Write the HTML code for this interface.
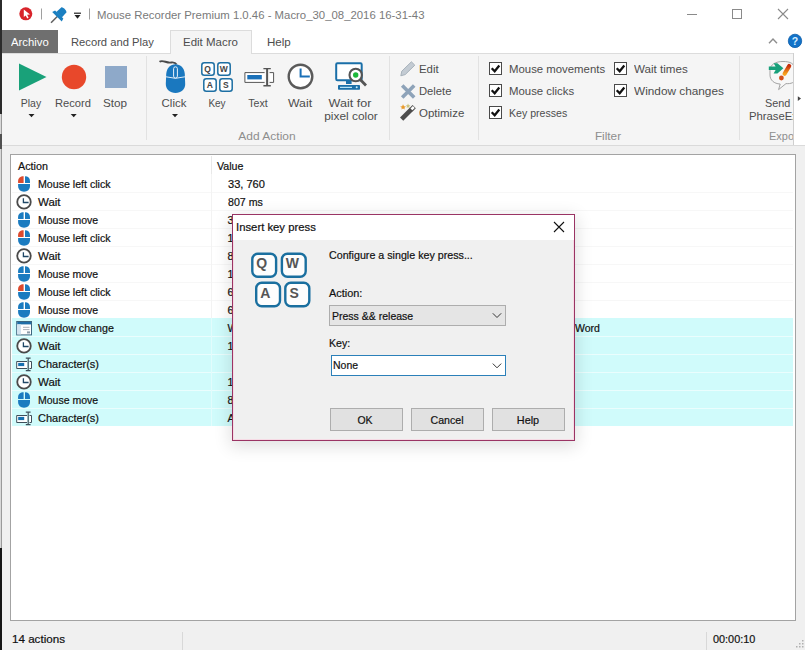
<!DOCTYPE html>
<html><head><meta charset="utf-8">
<style>
html,body{margin:0;padding:0;}
body{width:805px;height:650px;position:relative;overflow:hidden;background:#fff;font-family:"Liberation Sans", sans-serif;}
.t{position:absolute;white-space:nowrap;font-family:"Liberation Sans", sans-serif;}
.b{-webkit-text-stroke:0.2px currentColor;}
.r{position:absolute;}
svg.r{overflow:visible;}
</style></head><body>
<div class="r" style="left:0px;top:0px;width:805px;height:30px;background:#ffffff"></div>
<div class="r" style="left:0px;top:30px;width:805px;height:23px;background:#ffffff"></div>
<div class="r" style="left:0px;top:53px;width:805px;height:93px;background:#f5f5f5;border-top:1px solid #dcdcdc;box-sizing:border-box"></div>
<div class="r" style="left:0px;top:145px;width:805px;height:1px;background:#dadada"></div>
<div class="r" style="left:0px;top:146px;width:805px;height:504px;background:#f0f0f0"></div>
<div class="r" style="left:0px;top:0px;width:2px;height:114px;background:#2b2b2b"></div>
<div class="r" style="left:0px;top:114px;width:2px;height:20px;background:#d8d8d8;border-right:1px solid #9a9a9a;box-sizing:border-box"></div>
<div class="r" style="left:0px;top:134px;width:2px;height:15px;background:#505050"></div>
<div class="r" style="left:0px;top:149px;width:2px;height:399px;background:#d8d8d8;border-right:1px solid #9a9a9a;box-sizing:border-box"></div>
<div class="r" style="left:0px;top:548px;width:2px;height:102px;background:#161616"></div>
<svg class="r" style="left:0;top:0" width="100" height="30" viewBox="0 0 100 30">
<circle cx="25.8" cy="13.8" r="6.5" fill="#d8232a"/>
<path d="M23.8 9.4 L23.8 17 L25.6 15.4 L27.3 18.4 L28.6 17.7 L27.1 14.8 L30 14.6 Z" fill="#fff"/>
<rect x="41" y="8.5" width="1" height="11" fill="#a0a0a0"/>
<g transform="translate(57.25 16.5) rotate(45)">
<path d="M0 0 L0 8.8" stroke="#5f5f5f" stroke-width="1.5"/>
<path d="M-6.8 0.4 L6.8 0.4 L5.8 -2.8 L-5.8 -2.8 Z" fill="#1a7fc1"/>
<path d="M-3.9 -2.6 L3.9 -2.6 L3.6 -9.2 C3.4 -11 -3.4 -11 -3.6 -9.2 Z" fill="#1a7fc1"/>
</g>
<rect x="74" y="12.6" width="7" height="1.2" fill="#222"/>
<path d="M74.5 15 L80.5 15 L77.5 18.8 Z" fill="#222"/>
<rect x="89" y="8.5" width="1" height="11" fill="#a0a0a0"/>
</svg>
<div class="t" style="left:96.70px;top:10px;font-size:11.34px;line-height:11.34px;color:#7a7a7a;transform:scaleX(1.0039);transform-origin:0 0;">Mouse Recorder Premium 1.0.46 - Macro_30_08_2016 16-31-43</div>
<svg class="r" style="left:670px;top:0" width="135" height="30" viewBox="670 0 135 30">
<rect x="687" y="14" width="10" height="1" fill="#8a8a8a"/>
<rect x="732.5" y="9.5" width="9" height="9" fill="none" stroke="#8a8a8a" stroke-width="1"/>
<path d="M778 9 L788 19 M788 9 L778 19" stroke="#8a8a8a" stroke-width="1.1"/>
</svg>
<div class="r" style="left:2px;top:30px;width:56px;height:23px;background:#6f6f6f"></div>
<div class="t" style="left:11.00px;top:37px;font-size:11px;line-height:11px;color:#ffffff;transform:scaleX(1.0303);transform-origin:0 0;">Archivo</div>
<div class="t" style="left:71.30px;top:37px;font-size:11.1px;line-height:11.1px;color:#4d4d4d;transform:scaleX(1.0094);transform-origin:0 0;">Record and Play</div>
<div class="r" style="left:170px;top:30px;width:82px;height:24px;background:#f5f5f5;border:1px solid #dcdcdc;border-bottom:none;box-sizing:border-box"></div>
<div class="t" style="left:182.60px;top:37px;font-size:11.3px;line-height:11.3px;color:#4d4d4d;transform:scaleX(1.0167);transform-origin:0 0;">Edit Macro</div>
<div class="t" style="left:266.50px;top:37px;font-size:11.2px;line-height:11.2px;color:#4d4d4d;transform:scaleX(1.0348);transform-origin:0 0;">Help</div>
<svg class="r" style="left:760px;top:30px" width="45" height="23" viewBox="760 30 45 23">
<path d="M769 43.2 L773 39 L777 43.2" fill="none" stroke="#8e8e8e" stroke-width="1.4"/>
<circle cx="795" cy="40.9" r="6.7" fill="#1272c8" stroke="#0b5ca8" stroke-width="0.8"/>
<text x="795" y="45.3" font-family="Liberation Sans" font-weight="bold" font-size="10.5" fill="#d6efff" text-anchor="middle">?</text>
</svg>
<svg class="r" style="left:0;top:53px" width="150" height="92" viewBox="0 53 150 92">
<path d="M19 63.5 L46.5 77 L19 90.5 Z" fill="#19a179"/>
<circle cx="74" cy="77" r="12.2" fill="#e8482b"/>
<rect x="105" y="66" width="22" height="22" fill="#8ea9c9"/>
<path d="M28.5 114 L34.5 114 L31.5 117.3 Z" fill="#222"/>
<path d="M70.7 114 L76.7 114 L73.7 117.3 Z" fill="#222"/>
</svg>
<div class="t" style="left:-68.80px;width:200px;text-align:center;top:98px;font-size:11.3px;line-height:11.3px;color:#4d4d4d;transform:scaleX(0.9279);transform-origin:50% 0;">Play</div>
<div class="t" style="left:-26.90px;width:200px;text-align:center;top:98px;font-size:11.3px;line-height:11.3px;color:#4d4d4d;transform:scaleX(0.9884);transform-origin:50% 0;">Record</div>
<div class="t" style="left:15.00px;width:200px;text-align:center;top:98px;font-size:11.3px;line-height:11.3px;color:#4d4d4d;transform:scaleX(1.0373);transform-origin:50% 0;">Stop</div>
<div class="r" style="left:146px;top:56px;width:1px;height:84px;background:#e2e2e2"></div>
<svg class="r" style="left:150px;top:53px" width="240" height="92" viewBox="150 53 240 92">
<!-- mouse -->
<path d="M159.5 61.8 C162.5 59.6 166 62.8 170 62.6 C173 62.4 175 61.6 176.5 64.5" fill="none" stroke="#4a4a4a" stroke-width="1.9"/>
<path d="M175.5 64.3 C180.5 64.3 184.2 67.8 184.8 74 L185.2 84 C185.2 89.5 181 93 175.5 93 C170 93 165.8 89.5 165.8 84 L166.2 74 C166.8 67.8 170.5 64.3 175.5 64.3 Z" fill="#1a78bf"/>
<path d="M166 76.8 Q175.5 79.8 185 76.8" fill="none" stroke="#dcebf7" stroke-width="1"/>
<rect x="173.6" y="66.8" width="3.8" height="11.2" rx="1.9" fill="#1a78bf" stroke="#e9f3fb" stroke-width="1"/>
<path d="M172 114 L178 114 L175 117.3 Z" fill="#222"/>
<!-- keys -->
<g fill="#fff" stroke="#1d6fa3" stroke-width="1.5">
<rect x="201.8" y="62.8" width="12.4" height="12.4" rx="2.5"/>
<rect x="217.8" y="62.8" width="12.4" height="12.4" rx="2.5"/>
<rect x="203.8" y="78.8" width="12.4" height="12.4" rx="2.5"/>
<rect x="219.8" y="78.8" width="12.4" height="12.4" rx="2.5"/>
</g>
<g font-family="Liberation Sans" font-weight="bold" font-size="8.5" fill="#444" text-anchor="middle">
<text x="207.5" y="72">Q</text><text x="223.8" y="72">W</text><text x="209.8" y="88">A</text><text x="225.8" y="88">S</text>
</g>
<!-- text icon -->
<path d="M264.6 72.6 L244.9 72.6 L244.9 82.4 L264.6 82.4 M269.6 72.6 L273.6 72.6 L273.6 82.4 L269.6 82.4" fill="#fff" stroke="#555" stroke-width="1"/>
<rect x="247.3" y="75" width="14.5" height="4.4" fill="#1a70b8"/>
<path d="M267.1 68.8 L267.1 85.6" stroke="#555" stroke-width="2"/>
<path d="M263.4 68.6 L270.8 68.6 M263.4 85.8 L270.8 85.8" stroke="#555" stroke-width="1.4"/>
<!-- clock -->
<circle cx="300.5" cy="76.5" r="11.8" fill="#fff" stroke="#5a5a5a" stroke-width="2.4"/>
<path d="M300.6 68.4 L300.6 76.6 L309.8 76.6" stroke="#1a70b8" stroke-width="2" fill="none"/>
<!-- monitor -->
<rect x="336.2" y="63.2" width="25.5" height="17" rx="1.2" fill="#fff" stroke="#1a6fa8" stroke-width="2"/>
<rect x="346" y="81" width="5.6" height="3" fill="#1a6fa8"/>
<rect x="338" y="85" width="22" height="4.7" rx="0.8" fill="#1a6fa8"/>
<rect x="340" y="86.8" width="12" height="1.1" fill="#c8f0ff"/>
<circle cx="356.7" cy="87.3" r="1" fill="#c8f0ff"/>
<path d="M360.2 79.6 L366 85.4" stroke="#555" stroke-width="2.8"/>
<circle cx="355.7" cy="75" r="6.2" fill="#fff" stroke="#555" stroke-width="2.1"/>
<circle cx="355.7" cy="75" r="2.7" fill="#1db83a"/>
</svg>
<div class="t" style="left:74.00px;width:200px;text-align:center;top:98px;font-size:11.3px;line-height:11.3px;color:#4d4d4d;transform:scaleX(1.0122);transform-origin:50% 0;">Click</div>
<div class="t" style="left:116.90px;width:200px;text-align:center;top:98px;font-size:11.3px;line-height:11.3px;color:#4d4d4d;transform:scaleX(0.8835);transform-origin:50% 0;">Key</div>
<div class="t" style="left:158.40px;width:200px;text-align:center;top:98px;font-size:11.3px;line-height:11.3px;color:#4d4d4d;transform:scaleX(0.9405);transform-origin:50% 0;">Text</div>
<div class="t" style="left:200.20px;width:200px;text-align:center;top:98px;font-size:11.3px;line-height:11.3px;color:#4d4d4d;transform:scaleX(1.0870);transform-origin:50% 0;">Wait</div>
<div class="t" style="left:250.20px;width:200px;text-align:center;top:98px;font-size:11.3px;line-height:11.3px;color:#4d4d4d;transform:scaleX(1.1117);transform-origin:50% 0;">Wait for</div>
<div class="t" style="left:250.90px;width:200px;text-align:center;top:111px;font-size:11.3px;line-height:11.3px;color:#4d4d4d;transform:scaleX(1.0532);transform-origin:50% 0;">pixel color</div>
<div class="t" style="left:166.50px;width:200px;text-align:center;top:131px;font-size:11.3px;line-height:11.3px;color:#8e8e8e;transform:scaleX(1.0608);transform-origin:50% 0;">Add Action</div>
<div class="r" style="left:389px;top:56px;width:1px;height:84px;background:#e2e2e2"></div>
<svg class="r" style="left:395px;top:53px" width="85" height="92" viewBox="395 53 85 92">
<path d="M400.8 75.8 L401.8 71.2 L411.4 61.8 L414.8 65.2 L405.2 74.6 Z" fill="#c3cbd3" stroke="#a0abb6" stroke-width="0.9"/>
<path d="M402.2 85.4 L414.2 97.4 M414.2 85.4 L402.2 97.4" stroke="#8ea3b9" stroke-width="3.6"/>
<path d="M401.6 119.2 L411.6 109.2" stroke="#4d4d4d" stroke-width="4.6"/>
<path d="M411 109.8 L414.2 106.6" stroke="#4d4d4d" stroke-width="4.6"/>
<path d="M411.4 109.4 L413.8 107" stroke="#fff" stroke-width="2.6"/>
<path d="M403 104.3 L404 106.3 L406 106.6 L404.4 107.8 L404.8 109.6 L403 108.6 L401.4 109.6 L401.8 107.8 L400.2 106.6 L402.2 106.3 Z" fill="#e89a2a"/>
<path d="M408 103.6 L408.8 105.2 L410.4 105.4 L409.2 106.4 L409.5 108 L408 107.2 L406.6 108 L407 106.4 L405.8 105.4 L407.3 105.2 Z" fill="#c8c07a"/>
</svg>
<div class="t" style="left:418.60px;top:64px;font-size:11.3px;line-height:11.3px;color:#4d4d4d;transform:scaleX(1.0119);transform-origin:0 0;">Edit</div>
<div class="t" style="left:418.60px;top:86px;font-size:11.3px;line-height:11.3px;color:#4d4d4d;transform:scaleX(0.9952);transform-origin:0 0;">Delete</div>
<div class="t" style="left:418.60px;top:108px;font-size:11.3px;line-height:11.3px;color:#4d4d4d;transform:scaleX(1.0162);transform-origin:0 0;">Optimize</div>
<div class="r" style="left:478px;top:56px;width:1px;height:84px;background:#e2e2e2"></div>
<svg class="r" style="left:489px;top:62px" width="13" height="13" viewBox="0 0 13 13">
<rect x="0.5" y="0.5" width="12" height="12" fill="#fff" stroke="#4a4a4a" stroke-width="1"/>
<path d="M2.7 6.2 L5.7 9.2 L10.3 3.6" fill="none" stroke="#111" stroke-width="2.3"/>
</svg>
<svg class="r" style="left:489px;top:84px" width="13" height="13" viewBox="0 0 13 13">
<rect x="0.5" y="0.5" width="12" height="12" fill="#fff" stroke="#4a4a4a" stroke-width="1"/>
<path d="M2.7 6.2 L5.7 9.2 L10.3 3.6" fill="none" stroke="#111" stroke-width="2.3"/>
</svg>
<svg class="r" style="left:489px;top:106px" width="13" height="13" viewBox="0 0 13 13">
<rect x="0.5" y="0.5" width="12" height="12" fill="#fff" stroke="#4a4a4a" stroke-width="1"/>
<path d="M2.7 6.2 L5.7 9.2 L10.3 3.6" fill="none" stroke="#111" stroke-width="2.3"/>
</svg>
<svg class="r" style="left:614px;top:62px" width="13" height="13" viewBox="0 0 13 13">
<rect x="0.5" y="0.5" width="12" height="12" fill="#fff" stroke="#4a4a4a" stroke-width="1"/>
<path d="M2.7 6.2 L5.7 9.2 L10.3 3.6" fill="none" stroke="#111" stroke-width="2.3"/>
</svg>
<svg class="r" style="left:614px;top:84px" width="13" height="13" viewBox="0 0 13 13">
<rect x="0.5" y="0.5" width="12" height="12" fill="#fff" stroke="#4a4a4a" stroke-width="1"/>
<path d="M2.7 6.2 L5.7 9.2 L10.3 3.6" fill="none" stroke="#111" stroke-width="2.3"/>
</svg>
<div class="t" style="left:509.00px;top:64px;font-size:11.3px;line-height:11.3px;color:#4d4d4d;transform:scaleX(1.0069);transform-origin:0 0;">Mouse movements</div>
<div class="t" style="left:509.00px;top:86px;font-size:11.3px;line-height:11.3px;color:#4d4d4d;transform:scaleX(1.0077);transform-origin:0 0;">Mouse clicks</div>
<div class="t" style="left:509.00px;top:108px;font-size:11.3px;line-height:11.3px;color:#4d4d4d;transform:scaleX(0.9359);transform-origin:0 0;">Key presses</div>
<div class="t" style="left:634.00px;top:64px;font-size:11.3px;line-height:11.3px;color:#4d4d4d;transform:scaleX(1.0265);transform-origin:0 0;">Wait times</div>
<div class="t" style="left:634.00px;top:86px;font-size:11.3px;line-height:11.3px;color:#4d4d4d;transform:scaleX(1.0450);transform-origin:0 0;">Window changes</div>
<div class="t" style="left:508.30px;width:200px;text-align:center;top:131px;font-size:11.3px;line-height:11.3px;color:#8e8e8e;transform:scaleX(1.0428);transform-origin:50% 0;">Filter</div>
<div class="r" style="left:739px;top:56px;width:1px;height:84px;background:#e2e2e2"></div>
<div class="r" style="left:740px;top:54px;width:53px;height:90px;overflow:hidden">
<svg style="position:absolute;left:0;top:0" width="60" height="90" viewBox="740 54 60 90">
<defs><linearGradient id="exg" x1="0" y1="0" x2="0" y2="1"><stop offset="0" stop-color="#c8300e"/><stop offset="1" stop-color="#f7a21e"/></linearGradient></defs>
<path d="M770 70.5 C770 64.5 775.5 61.5 783 61.5 C790 61.5 795 63.5 795 70 L795 79 C795 82.5 791 84 786 83.6 L778.6 89.6 L780.2 84 C774 83.8 770 80 770 75 Z" fill="#f7f7f7" stroke="#9a9a9a" stroke-width="0.9"/>
<path d="M768.8 66.6 L775.6 66.6 L773.6 63.3 L777.4 63.3 L783.4 68.3 L777.4 73.5 L773.6 73.5 L775.6 70.1 L768.8 70.1 Z" fill="#18a07a"/>
<path d="M789.2 66 L784.6 73.8" stroke="url(#exg)" stroke-width="4.2" stroke-linecap="round"/>
<circle cx="781.4" cy="78" r="2.4" fill="#d4501c"/>
</svg>
<div class="t" style="left:0;width:78px;text-align:center;top:97.7px;top:{0}px"></div>
</div>
<div class="t" style="left:765.20px;top:98px;font-size:11.3px;line-height:11.3px;color:#4d4d4d;transform:scaleX(0.9592);transform-origin:0 0;">Send</div>
<div class="t" style="left:749.20px;top:111px;font-size:11.3px;line-height:11.3px;color:#4d4d4d;transform:scaleX(1.0003);transform-origin:0 0;">PhraseEx</div>
<div class="t" style="left:769.00px;top:131px;font-size:11.3px;line-height:11.3px;color:#8e8e8e;transform:scaleX(0.9709);transform-origin:0 0;">Expo</div>
<div class="r" style="left:793px;top:53px;width:12px;height:92px;background:#ffffff;border-left:1px solid #cfcfcf;box-sizing:border-box"></div>
<svg class="r" style="left:793px;top:53px" width="12" height="92" viewBox="793 53 12 92"><path d="M797.8 96.3 L801 98.6 L797.8 100.9 Z" fill="#444"/></svg>
<div class="r" style="left:10px;top:154px;width:786px;height:467px;background:#fff;border:1px solid #a3a3a3;box-sizing:border-box"></div>
<div class="r" style="left:211px;top:156px;width:1px;height:18px;background:#e8e8e8"></div>
<div class="t b" style="left:17.80px;top:161px;font-size:10.8px;line-height:10.8px;color:#111;transform:scaleX(0.9961);transform-origin:0 0;">Action</div>
<div class="t b" style="left:217.30px;top:161px;font-size:10.8px;line-height:10.8px;color:#111;transform:scaleX(0.9846);transform-origin:0 0;">Value</div>
<div class="r" style="left:12px;top:192px;width:781px;height:1px;background:#f7f7f7"></div>
<div class="r" style="left:211px;top:174px;width:1px;height:18px;background:#f3f3f3"></div>
<div class="t b" style="left:38.00px;top:179px;font-size:10.8px;line-height:10.8px;color:#111;transform:scaleX(0.9832);transform-origin:0 0;">Mouse left click</div>
<div class="t b" style="left:227.60px;top:179px;font-size:10.8px;line-height:10.8px;color:#111;transform:scaleX(1.0250);transform-origin:0 0;">33, 760</div>
<svg class="r" style="left:17px;top:175px" width="14" height="17" viewBox="0 0 14 17">
<path d="M6.6 1.2 L6.6 8 L1.1 8 L1.1 6.2 C1.1 3 3.4 1.2 6.6 1.2 Z" fill="#dc4a2e"/>
<path d="M8 1.2 L8 8 L13 8 L13 6.2 C13 3 11 1.2 8 1.2 Z" fill="#1a7bc0"/>
<path d="M1.1 9.1 L13 9.1 L13 11 C13 14.5 10.5 16.7 7 16.7 C3.6 16.7 1.1 14.5 1.1 11 Z" fill="#1a7bc0"/>
</svg>
<div class="r" style="left:12px;top:210px;width:781px;height:1px;background:#f7f7f7"></div>
<div class="r" style="left:211px;top:192px;width:1px;height:18px;background:#f3f3f3"></div>
<div class="t b" style="left:38.00px;top:197px;font-size:10.8px;line-height:10.8px;color:#111;transform:scaleX(1.0619);transform-origin:0 0;">Wait</div>
<div class="t b" style="left:227.60px;top:197px;font-size:10.8px;line-height:10.8px;color:#111;transform:scaleX(0.9829);transform-origin:0 0;">807 ms</div>
<svg class="r" style="left:16px;top:193px" width="16" height="17" viewBox="0 0 16 17">
<circle cx="8" cy="8.9" r="6.75" fill="#fff" stroke="#4a4a4a" stroke-width="1.8"/>
<path d="M7.4 5.2 L7.4 9.5 L12.6 9.5" fill="none" stroke="#1f4766" stroke-width="1.3"/>
</svg>
<div class="r" style="left:12px;top:228px;width:781px;height:1px;background:#f7f7f7"></div>
<div class="r" style="left:211px;top:210px;width:1px;height:18px;background:#f3f3f3"></div>
<div class="t b" style="left:38.00px;top:215px;font-size:10.8px;line-height:10.8px;color:#111;transform:scaleX(0.9739);transform-origin:0 0;">Mouse move</div>
<div class="t b" style="left:227.60px;top:215px;font-size:10.8px;line-height:10.8px;color:#111;">3</div>
<svg class="r" style="left:17px;top:211px" width="14" height="17" viewBox="0 0 14 17">
<path d="M6.6 1.2 L6.6 8 L1.1 8 L1.1 6.2 C1.1 3 3.4 1.2 6.6 1.2 Z" fill="#1a7bc0"/>
<path d="M8 1.2 L8 8 L13 8 L13 6.2 C13 3 11 1.2 8 1.2 Z" fill="#1a7bc0"/>
<path d="M1.1 9.1 L13 9.1 L13 11 C13 14.5 10.5 16.7 7 16.7 C3.6 16.7 1.1 14.5 1.1 11 Z" fill="#1a7bc0"/>
</svg>
<div class="r" style="left:12px;top:246px;width:781px;height:1px;background:#f7f7f7"></div>
<div class="r" style="left:211px;top:228px;width:1px;height:18px;background:#f3f3f3"></div>
<div class="t b" style="left:38.00px;top:233px;font-size:10.8px;line-height:10.8px;color:#111;transform:scaleX(0.9832);transform-origin:0 0;">Mouse left click</div>
<div class="t b" style="left:227.60px;top:233px;font-size:10.8px;line-height:10.8px;color:#111;">1</div>
<svg class="r" style="left:17px;top:229px" width="14" height="17" viewBox="0 0 14 17">
<path d="M6.6 1.2 L6.6 8 L1.1 8 L1.1 6.2 C1.1 3 3.4 1.2 6.6 1.2 Z" fill="#dc4a2e"/>
<path d="M8 1.2 L8 8 L13 8 L13 6.2 C13 3 11 1.2 8 1.2 Z" fill="#1a7bc0"/>
<path d="M1.1 9.1 L13 9.1 L13 11 C13 14.5 10.5 16.7 7 16.7 C3.6 16.7 1.1 14.5 1.1 11 Z" fill="#1a7bc0"/>
</svg>
<div class="r" style="left:12px;top:264px;width:781px;height:1px;background:#f7f7f7"></div>
<div class="r" style="left:211px;top:246px;width:1px;height:18px;background:#f3f3f3"></div>
<div class="t b" style="left:38.00px;top:251px;font-size:10.8px;line-height:10.8px;color:#111;transform:scaleX(1.0619);transform-origin:0 0;">Wait</div>
<div class="t b" style="left:227.60px;top:251px;font-size:10.8px;line-height:10.8px;color:#111;">8</div>
<svg class="r" style="left:16px;top:247px" width="16" height="17" viewBox="0 0 16 17">
<circle cx="8" cy="8.9" r="6.75" fill="#fff" stroke="#4a4a4a" stroke-width="1.8"/>
<path d="M7.4 5.2 L7.4 9.5 L12.6 9.5" fill="none" stroke="#1f4766" stroke-width="1.3"/>
</svg>
<div class="r" style="left:12px;top:282px;width:781px;height:1px;background:#f7f7f7"></div>
<div class="r" style="left:211px;top:264px;width:1px;height:18px;background:#f3f3f3"></div>
<div class="t b" style="left:38.00px;top:269px;font-size:10.8px;line-height:10.8px;color:#111;transform:scaleX(0.9739);transform-origin:0 0;">Mouse move</div>
<div class="t b" style="left:227.60px;top:269px;font-size:10.8px;line-height:10.8px;color:#111;">1</div>
<svg class="r" style="left:17px;top:265px" width="14" height="17" viewBox="0 0 14 17">
<path d="M6.6 1.2 L6.6 8 L1.1 8 L1.1 6.2 C1.1 3 3.4 1.2 6.6 1.2 Z" fill="#1a7bc0"/>
<path d="M8 1.2 L8 8 L13 8 L13 6.2 C13 3 11 1.2 8 1.2 Z" fill="#1a7bc0"/>
<path d="M1.1 9.1 L13 9.1 L13 11 C13 14.5 10.5 16.7 7 16.7 C3.6 16.7 1.1 14.5 1.1 11 Z" fill="#1a7bc0"/>
</svg>
<div class="r" style="left:12px;top:300px;width:781px;height:1px;background:#f7f7f7"></div>
<div class="r" style="left:211px;top:282px;width:1px;height:18px;background:#f3f3f3"></div>
<div class="t b" style="left:38.00px;top:287px;font-size:10.8px;line-height:10.8px;color:#111;transform:scaleX(0.9832);transform-origin:0 0;">Mouse left click</div>
<div class="t b" style="left:227.60px;top:287px;font-size:10.8px;line-height:10.8px;color:#111;">6</div>
<svg class="r" style="left:17px;top:283px" width="14" height="17" viewBox="0 0 14 17">
<path d="M6.6 1.2 L6.6 8 L1.1 8 L1.1 6.2 C1.1 3 3.4 1.2 6.6 1.2 Z" fill="#dc4a2e"/>
<path d="M8 1.2 L8 8 L13 8 L13 6.2 C13 3 11 1.2 8 1.2 Z" fill="#1a7bc0"/>
<path d="M1.1 9.1 L13 9.1 L13 11 C13 14.5 10.5 16.7 7 16.7 C3.6 16.7 1.1 14.5 1.1 11 Z" fill="#1a7bc0"/>
</svg>
<div class="r" style="left:211px;top:300px;width:1px;height:18px;background:#f3f3f3"></div>
<div class="t b" style="left:38.00px;top:305px;font-size:10.8px;line-height:10.8px;color:#111;transform:scaleX(0.9739);transform-origin:0 0;">Mouse move</div>
<div class="t b" style="left:227.60px;top:305px;font-size:10.8px;line-height:10.8px;color:#111;">6</div>
<svg class="r" style="left:17px;top:301px" width="14" height="17" viewBox="0 0 14 17">
<path d="M6.6 1.2 L6.6 8 L1.1 8 L1.1 6.2 C1.1 3 3.4 1.2 6.6 1.2 Z" fill="#1a7bc0"/>
<path d="M8 1.2 L8 8 L13 8 L13 6.2 C13 3 11 1.2 8 1.2 Z" fill="#1a7bc0"/>
<path d="M1.1 9.1 L13 9.1 L13 11 C13 14.5 10.5 16.7 7 16.7 C3.6 16.7 1.1 14.5 1.1 11 Z" fill="#1a7bc0"/>
</svg>
<div class="r" style="left:12px;top:318px;width:781px;height:18px;background:#d0fbfb"></div>
<div class="r" style="left:211px;top:318px;width:1px;height:18px;background:#e2fcfc"></div>
<div class="t b" style="left:38.00px;top:323px;font-size:10.8px;line-height:10.8px;color:#111;transform:scaleX(0.9870);transform-origin:0 0;">Window change</div>
<div class="t b" style="left:227.60px;top:323px;font-size:10.8px;line-height:10.8px;color:#111;">W</div>
<svg class="r" style="left:16px;top:319px" width="17" height="17" viewBox="0 0 17 17">
<rect x="0.7" y="2.5" width="14.8" height="13.4" fill="#fff" stroke="#3d6680" stroke-width="1"/>
<rect x="1.2" y="3" width="13.8" height="2.4" fill="#1e6fa8"/>
<rect x="1.2" y="5.4" width="3.8" height="10" fill="#d4e4f0"/>
<path d="M7 8.3 L13.5 8.3 M7 10.6 L13.5 10.6" stroke="#a0a8b0" stroke-width="0.9"/>
<rect x="11" y="12.4" width="3" height="2" fill="#8a9aa8"/>
</svg>
<div class="r" style="left:12px;top:336px;width:781px;height:18px;background:#d0fbfb"></div>
<div class="r" style="left:12px;top:336px;width:781px;height:1px;background:#eafdfd"></div>
<div class="r" style="left:211px;top:336px;width:1px;height:18px;background:#e2fcfc"></div>
<div class="t b" style="left:38.00px;top:341px;font-size:10.8px;line-height:10.8px;color:#111;transform:scaleX(1.0619);transform-origin:0 0;">Wait</div>
<div class="t b" style="left:227.60px;top:341px;font-size:10.8px;line-height:10.8px;color:#111;">1</div>
<svg class="r" style="left:16px;top:337px" width="16" height="17" viewBox="0 0 16 17">
<circle cx="8" cy="8.9" r="6.75" fill="#fff" stroke="#4a4a4a" stroke-width="1.8"/>
<path d="M7.4 5.2 L7.4 9.5 L12.6 9.5" fill="none" stroke="#1f4766" stroke-width="1.3"/>
</svg>
<div class="r" style="left:12px;top:354px;width:781px;height:18px;background:#d0fbfb"></div>
<div class="r" style="left:12px;top:354px;width:781px;height:1px;background:#eafdfd"></div>
<div class="r" style="left:211px;top:354px;width:1px;height:18px;background:#e2fcfc"></div>
<div class="t b" style="left:38.00px;top:359px;font-size:10.8px;line-height:10.8px;color:#111;transform:scaleX(1.0169);transform-origin:0 0;">Character(s)</div>
<svg class="r" style="left:16px;top:355px" width="17" height="17" viewBox="0 0 17 17">
<path d="M11 6.5 L0.7 6.5 L0.7 13.5 L11 13.5 M13.5 6.5 L15.5 6.5 L15.5 13.5 L13.5 13.5" fill="#fff" stroke="#3f4f5a" stroke-width="1"/>
<rect x="2.2" y="7.9" width="6" height="3.2" fill="#1670b0"/>
<path d="M12.2 3.4 L12.2 15.4 M9.8 3.2 L14.6 3.2 M9.8 15.6 L14.6 15.6" stroke="#3f4f5a" stroke-width="1.2" fill="none"/>
</svg>
<div class="r" style="left:12px;top:372px;width:781px;height:18px;background:#d0fbfb"></div>
<div class="r" style="left:12px;top:372px;width:781px;height:1px;background:#eafdfd"></div>
<div class="r" style="left:211px;top:372px;width:1px;height:18px;background:#e2fcfc"></div>
<div class="t b" style="left:38.00px;top:377px;font-size:10.8px;line-height:10.8px;color:#111;transform:scaleX(1.0619);transform-origin:0 0;">Wait</div>
<div class="t b" style="left:227.60px;top:377px;font-size:10.8px;line-height:10.8px;color:#111;">1</div>
<svg class="r" style="left:16px;top:373px" width="16" height="17" viewBox="0 0 16 17">
<circle cx="8" cy="8.9" r="6.75" fill="#fff" stroke="#4a4a4a" stroke-width="1.8"/>
<path d="M7.4 5.2 L7.4 9.5 L12.6 9.5" fill="none" stroke="#1f4766" stroke-width="1.3"/>
</svg>
<div class="r" style="left:12px;top:390px;width:781px;height:18px;background:#d0fbfb"></div>
<div class="r" style="left:12px;top:390px;width:781px;height:1px;background:#eafdfd"></div>
<div class="r" style="left:211px;top:390px;width:1px;height:18px;background:#e2fcfc"></div>
<div class="t b" style="left:38.00px;top:395px;font-size:10.8px;line-height:10.8px;color:#111;transform:scaleX(0.9739);transform-origin:0 0;">Mouse move</div>
<div class="t b" style="left:227.60px;top:395px;font-size:10.8px;line-height:10.8px;color:#111;">8</div>
<svg class="r" style="left:17px;top:391px" width="14" height="17" viewBox="0 0 14 17">
<path d="M6.6 1.2 L6.6 8 L1.1 8 L1.1 6.2 C1.1 3 3.4 1.2 6.6 1.2 Z" fill="#1a7bc0"/>
<path d="M8 1.2 L8 8 L13 8 L13 6.2 C13 3 11 1.2 8 1.2 Z" fill="#1a7bc0"/>
<path d="M1.1 9.1 L13 9.1 L13 11 C13 14.5 10.5 16.7 7 16.7 C3.6 16.7 1.1 14.5 1.1 11 Z" fill="#1a7bc0"/>
</svg>
<div class="r" style="left:12px;top:408px;width:781px;height:18px;background:#d0fbfb"></div>
<div class="r" style="left:12px;top:408px;width:781px;height:1px;background:#eafdfd"></div>
<div class="r" style="left:211px;top:408px;width:1px;height:18px;background:#e2fcfc"></div>
<div class="t b" style="left:38.00px;top:413px;font-size:10.8px;line-height:10.8px;color:#111;transform:scaleX(1.0169);transform-origin:0 0;">Character(s)</div>
<div class="t b" style="left:227.60px;top:413px;font-size:10.8px;line-height:10.8px;color:#111;">A</div>
<svg class="r" style="left:16px;top:409px" width="17" height="17" viewBox="0 0 17 17">
<path d="M11 6.5 L0.7 6.5 L0.7 13.5 L11 13.5 M13.5 6.5 L15.5 6.5 L15.5 13.5 L13.5 13.5" fill="#fff" stroke="#3f4f5a" stroke-width="1"/>
<rect x="2.2" y="7.9" width="6" height="3.2" fill="#1670b0"/>
<path d="M12.2 3.4 L12.2 15.4 M9.8 3.2 L14.6 3.2 M9.8 15.6 L14.6 15.6" stroke="#3f4f5a" stroke-width="1.2" fill="none"/>
</svg>
<div class="t b" style="left:575.00px;top:323px;font-size:10.5px;line-height:10.5px;color:#111;">Word</div>
<div class="t b" style="left:11.60px;top:634px;font-size:11.3px;line-height:11.3px;color:#111;transform:scaleX(1.0288);transform-origin:0 0;">14 actions</div>
<div class="r" style="left:182px;top:632px;width:1px;height:18px;background:#d8d8d8"></div>
<div class="r" style="left:706px;top:632px;width:1px;height:18px;background:#d8d8d8"></div>
<div class="t b" style="left:713.00px;top:634px;font-size:10.8px;line-height:10.8px;color:#111;transform:scaleX(1.0071);transform-origin:0 0;">00:00:10</div>
<svg class="r" style="left:795px;top:638px" width="10" height="12" viewBox="0 0 10 12">
<g fill="#b0b0b0"><rect x="7" y="2" width="1.5" height="1.5"/><rect x="4" y="5" width="1.5" height="1.5"/><rect x="7" y="5" width="1.5" height="1.5"/><rect x="1" y="8" width="1.5" height="1.5"/><rect x="4" y="8" width="1.5" height="1.5"/><rect x="7" y="8" width="1.5" height="1.5"/></g>
</svg>
<div class="r" style="left:226px;top:210px;width:356px;height:238px;box-shadow:0 4px 16px 2px rgba(0,0,0,0.12);background:transparent;left:232px;top:214px;width:343px;height:227px"></div>
<div class="r" style="left:232px;top:214px;width:343px;height:227px;background:#f0f0f0;border:1px solid #9a3464;box-shadow:inset 0 0 0 1px #f6dbe5;box-sizing:border-box"></div>
<div class="r" style="left:233px;top:215px;width:341px;height:25px;background:#fff"></div>
<div class="t b" style="left:236.30px;top:222px;font-size:11.2px;line-height:11.2px;color:#111;transform:scaleX(1.0109);transform-origin:0 0;">Insert key press</div>
<svg class="r" style="left:550px;top:218px" width="18" height="18" viewBox="550 218 18 18"><path d="M554 222 L564 232 M564 222 L554 232" stroke="#111" stroke-width="1.1"/></svg>
<svg class="r" style="left:245px;top:248px" width="70" height="65" viewBox="245 248 70 65">
<g fill="#fdfdfd" stroke="#1a6f9f" stroke-width="2.4">
<rect x="252.3" y="253.7" width="23.8" height="23" rx="5.5"/>
<rect x="281.9" y="253.7" width="23.8" height="23" rx="5.5"/>
<rect x="256.2" y="282.8" width="23.8" height="23.4" rx="5.5"/>
<rect x="285.3" y="282.8" width="24" height="23.4" rx="5.5"/>
</g>
<g font-family="Liberation Sans" font-weight="bold" font-size="14" fill="#555" text-anchor="middle">
<text x="261.6" y="268">Q</text><text x="292.3" y="268">W</text><text x="265.2" y="297.7">A</text><text x="294.2" y="297.7">S</text>
</g>
</svg>
<div class="t b" style="left:328.70px;top:250px;font-size:10.8px;line-height:10.8px;color:#111;transform:scaleX(0.9901);transform-origin:0 0;">Configure a single key press...</div>
<div class="t b" style="left:328.90px;top:288px;font-size:10.8px;line-height:10.8px;color:#111;transform:scaleX(1.0116);transform-origin:0 0;">Action:</div>
<div class="r" style="left:329px;top:305px;width:177px;height:21px;background:#e5e5e5;border:1px solid #adadad;box-sizing:border-box"></div>
<div class="t b" style="left:332.30px;top:311px;font-size:10.8px;line-height:10.8px;color:#111;transform:scaleX(0.9734);transform-origin:0 0;">Press &amp;&amp; release</div>
<div class="t b" style="left:328.50px;top:338px;font-size:10.8px;line-height:10.8px;color:#111;transform:scaleX(0.9811);transform-origin:0 0;">Key:</div>
<div class="r" style="left:331px;top:355px;width:175px;height:21px;background:#fff;border:1px solid #2b80b9;box-sizing:border-box"></div>
<div class="t b" style="left:333.20px;top:360px;font-size:10.8px;line-height:10.8px;color:#111;transform:scaleX(0.9691);transform-origin:0 0;">None</div>
<svg class="r" style="left:490px;top:305px" width="16" height="75" viewBox="490 305 16 75">
<path d="M492.8 313.3 L497 317.5 L501.2 313.3" fill="none" stroke="#333" stroke-width="1"/>
<path d="M492.8 363.6 L497 367.8 L501.2 363.6" fill="none" stroke="#333" stroke-width="1"/>
</svg>
<div class="r" style="left:330px;top:408px;width:73px;height:23px;background:#e1e1e1;border:1px solid #adadad;box-sizing:border-box"></div>
<div class="t b" style="left:265.45px;width:200px;text-align:center;top:415px;font-size:10.8px;line-height:10.8px;color:#111;transform:scaleX(0.9683);transform-origin:50% 0;">OK</div>
<div class="r" style="left:411px;top:408px;width:73px;height:23px;background:#e1e1e1;border:1px solid #adadad;box-sizing:border-box"></div>
<div class="t b" style="left:346.60px;width:200px;text-align:center;top:415px;font-size:10.8px;line-height:10.8px;color:#111;transform:scaleX(0.9819);transform-origin:50% 0;">Cancel</div>
<div class="r" style="left:492px;top:408px;width:73px;height:23px;background:#e1e1e1;border:1px solid #adadad;box-sizing:border-box"></div>
<div class="t b" style="left:427.95px;width:200px;text-align:center;top:415px;font-size:10.8px;line-height:10.8px;color:#111;transform:scaleX(1.0044);transform-origin:50% 0;">Help</div>
</body></html>
